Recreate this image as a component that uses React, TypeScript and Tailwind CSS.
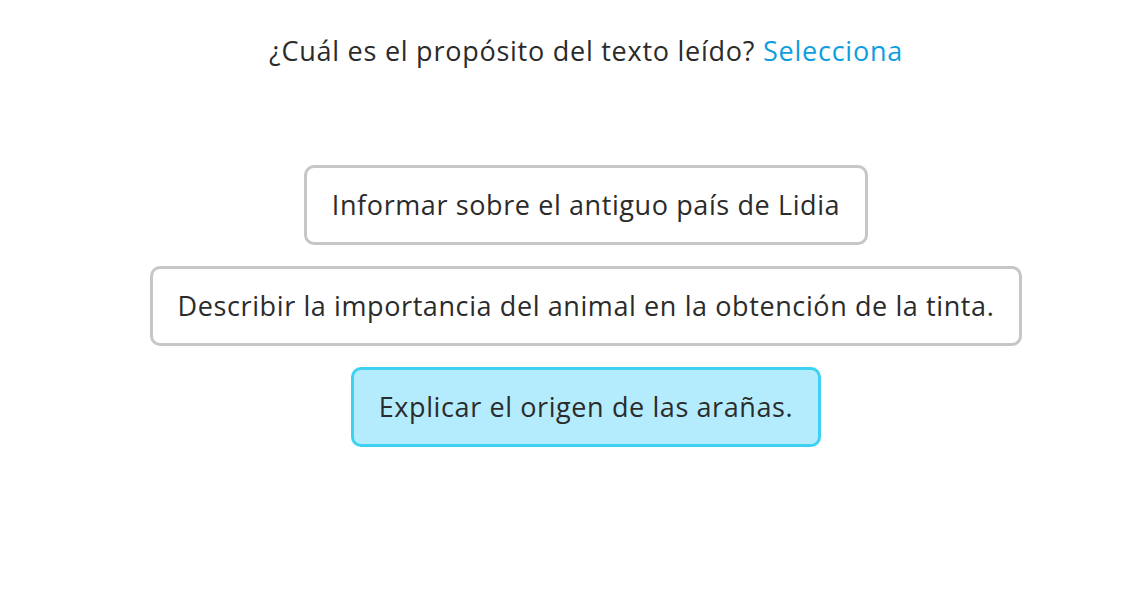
const options = [
  { text: 'Informar sobre el antiguo país de Lidia', selected: false },
  { text: 'Describir la importancia del animal en la obtención de la tinta.', selected: false },
  { text: 'Explicar el origen de las arañas.', selected: true },
];

export default function App() {
  return (
    <div className="flex h-[606px] w-[1143px] flex-col items-center bg-white pl-[29px] font-['Open_Sans',sans-serif] text-[#2b2b2b]">
      <p className="mt-[31px] text-[27px] leading-[40px] tracking-[0.75px]">
        ¿Cuál es el propósito del texto leído?{' '}
        <span className="text-[#0e9ede]">Selecciona</span>
      </p>
      <div className="mt-[94px] flex flex-col items-center gap-[21px]">
        {options.map((o) => (
          <button
            key={o.text}
            type="button"
            className={`h-[80px] rounded-[10px] border-[3px] px-[25px] text-[27px] tracking-[0.6px] ${
              o.selected ? 'border-[#3ed2f2] bg-[#b4ecfd]' : 'border-[#c6c6c6] bg-white'
            }`}
          >
            {o.text}
          </button>
        ))}
      </div>
    </div>
  );
}
